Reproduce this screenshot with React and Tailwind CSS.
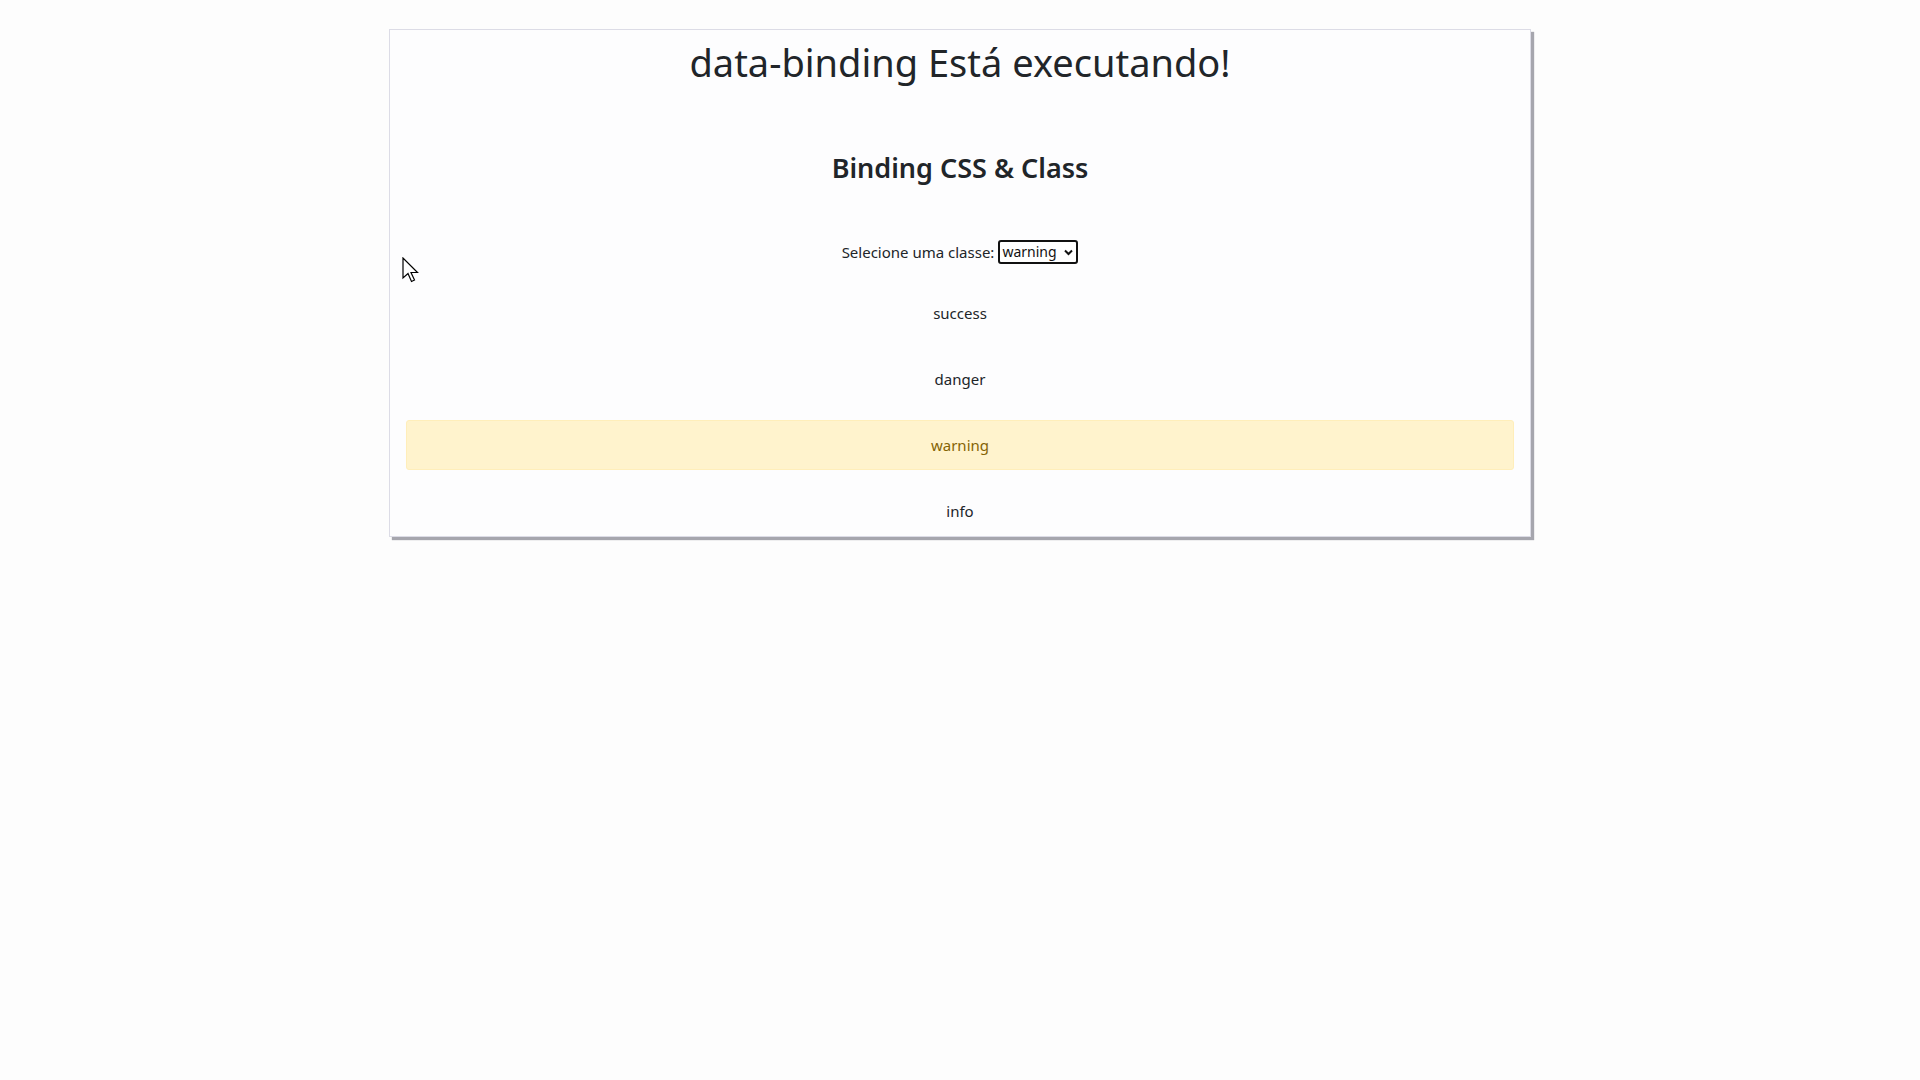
import { useState } from 'react';

const classes = ['success', 'danger', 'warning', 'info'];

export default function App() {
  const [selected, setSelected] = useState('warning');

  return (
    <div className="min-h-screen bg-[#fdfdfd] pt-[29px] relative" style={{ fontFamily: '"Noto Sans", "Open Sans", sans-serif' }}>
      <div className="w-[1142px] h-[508px] mx-auto bg-[#fdfdfe] border border-[#dcdce6] shadow-[3px_3px_1px_#a6a6ae] px-4 pt-[8px] text-[#212529]">
        <h1 className="text-[38px] leading-[48px] text-center font-normal">data-binding Está executando!</h1>

        <h2 className="mt-[65px] text-[27px] leading-[34px] text-center font-semibold">Binding CSS &amp; Class</h2>

        <div className="mt-[55px] flex items-center justify-center h-6 text-[15px]">
          <span className="mr-1">Selecione uma classe:</span>
          <div className="relative">
            <select
              value={selected}
              onChange={(e) => setSelected(e.target.value)}
              className="appearance-none w-[80px] h-6 border-2 border-[#111] rounded-[3px] bg-white pl-[2px] pr-4 text-[14px] leading-5 text-[#111] outline-none"
            >
              {classes.map((c) => (
                <option key={c} value={c}>{c}</option>
              ))}
            </select>
            <svg className="absolute right-[5px] top-[9px] pointer-events-none" width="9" height="7" viewBox="0 0 9 7">
              <path d="M1 1.5 L4.5 5 L8 1.5" fill="none" stroke="#111" strokeWidth="2" />
            </svg>
          </div>
        </div>

        <div className="mt-6 flex flex-col gap-4">
          {classes.map((c) => (
            <div
              key={c}
              className={
                c === selected
                  ? 'h-[50px] flex items-center justify-center border border-[#ffeeba] bg-[#fff3cd] text-[#856404] text-[15px] rounded-[3px]'
                  : 'h-[50px] flex items-center justify-center border border-transparent text-[15px]'
              }
            >
              {c}
            </div>
          ))}
        </div>
      </div>

      {/* cursor */}
      <svg className="absolute left-[402px] top-[257px]" width="20" height="28" viewBox="0 0 20 28">
        <path d="M1 1 L1 21 L6 16.5 L9.5 24.5 L12.5 23 L9 15.5 L15.5 15.5 Z" fill="#fff" stroke="#000" strokeWidth="1.2" strokeLinejoin="miter" />
      </svg>
    </div>
  );
}
